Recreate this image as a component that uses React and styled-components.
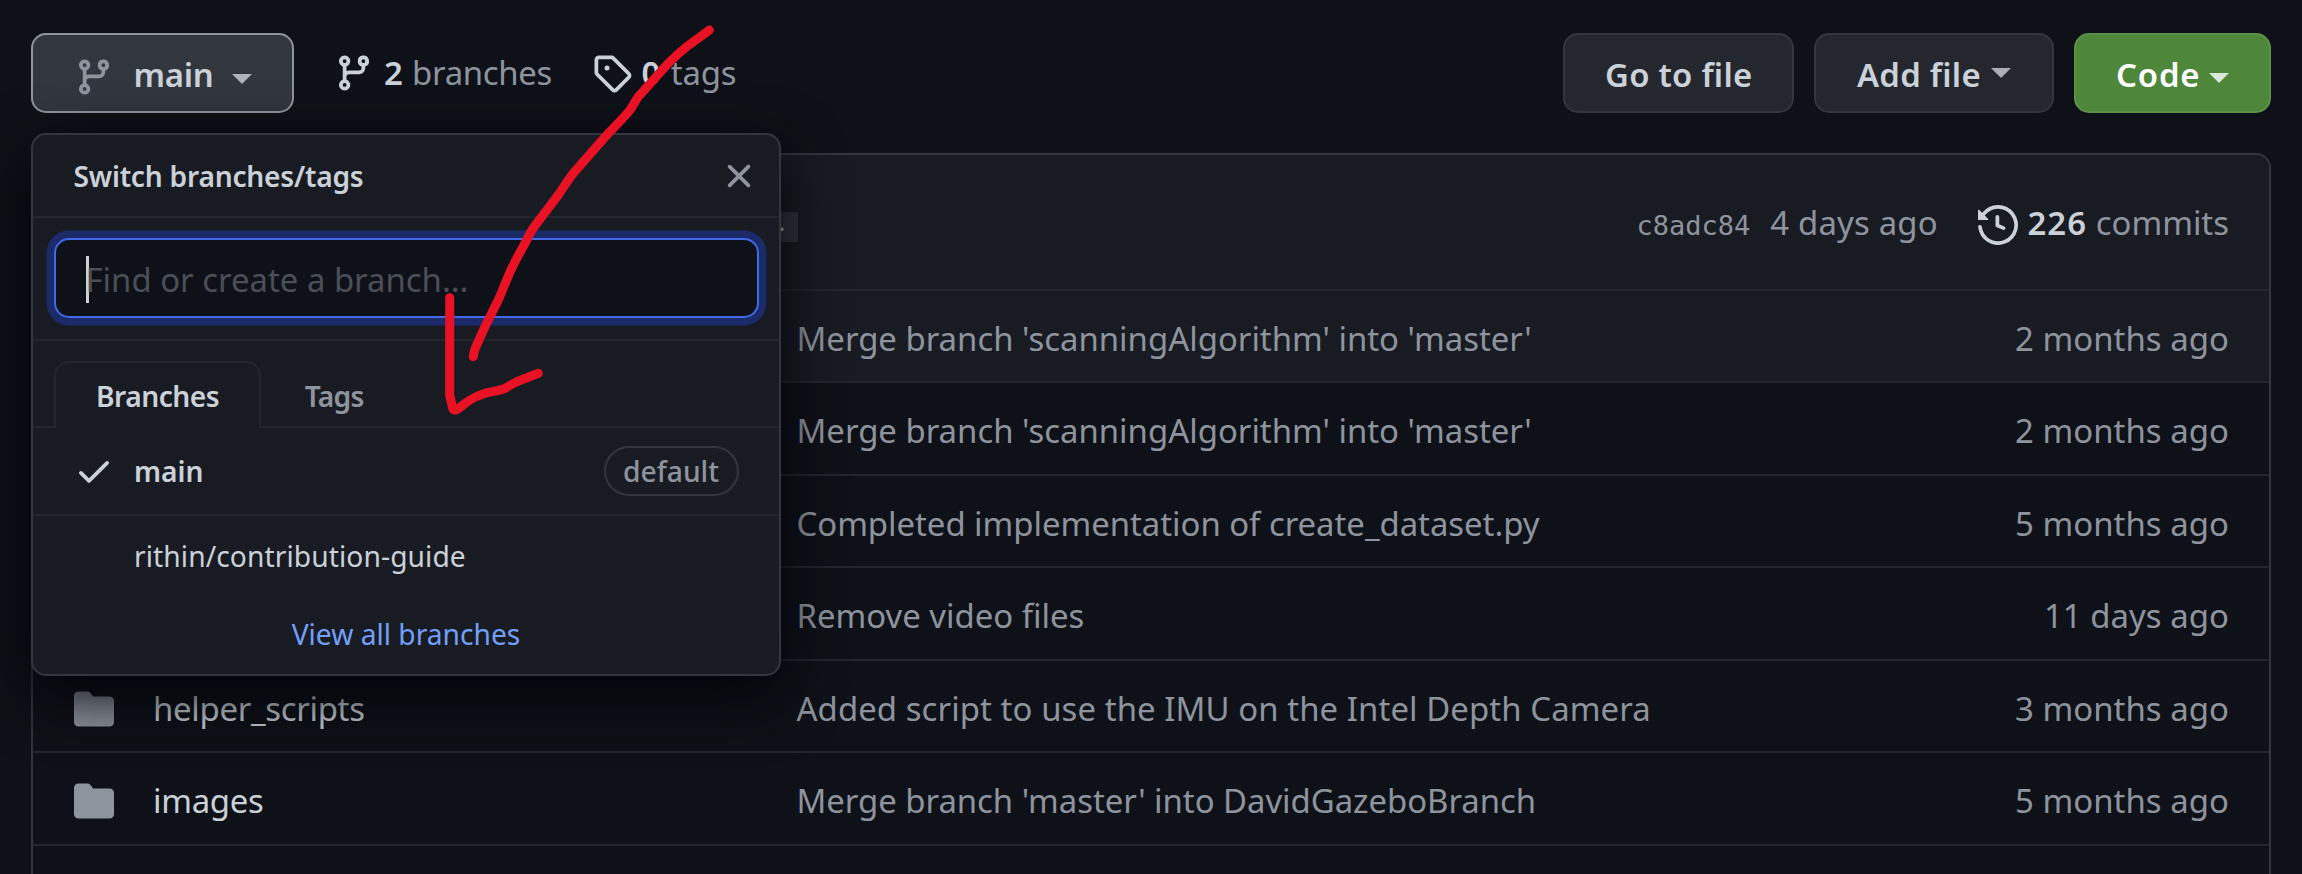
import React from "react";
import styled, { createGlobalStyle } from "styled-components";

const color = {
  canvas: "#0e1117",
  subtle: "#191b22",
  control: "#24272e",
  controlActive: "#32363d",
  border: "#32363d",
  borderMuted: "#23262d",
  text: "#cbd1d9",
  muted: "#8e949e",
  faint: "#4a4f58",
  link: "#729ff9",
  focus: "#4269e6",
  focusRing: "#1b2a68",
  green: "#4e863a",
  greenBorder: "#5d9149",
  ink: "#e81224",
};

const GlobalStyle = createGlobalStyle`
  *, *::before, *::after { box-sizing: border-box; }
  html, body { margin: 0; background: ${color.canvas}; }
  body {
    height: 874px;
    overflow: hidden;
    color: ${color.text};
    font-family: "Noto Sans", "Open Sans", sans-serif;
    font-size: 32.9px;
    line-height: 50px;
  }
`;

const Page = styled.div`
  position: relative;
  height: 874px;
  overflow: hidden;
  padding: 33px 31px 0;
`;

const Toolbar = styled.header`
  display: flex;
  align-items: center;
  height: 80px;
`;

const Text = styled.span`
  white-space: pre;
  letter-spacing: ${(p) => p.$track || 0}px;
`;

const Strong = styled(Text)`
  font-weight: 600;
  color: ${color.text};
`;

const Muted = styled(Text)`
  color: ${color.muted};
`;

const Svg = styled.svg`
  display: block;
  flex: none;
  width: 40px;
  height: 40px;
  fill: ${(p) => p.$fill || color.text};
`;

const Caret = styled.span`
  flex: none;
  border: 10px solid transparent;
  border-top-color: currentColor;
  border-bottom: 0;
  opacity: 0.8;
`;

const Button = styled.button`
  display: flex;
  align-items: center;
  height: 80px;
  padding: 3px 40px 0;
  border: 2px solid ${(p) => (p.$primary ? color.greenBorder : color.border)};
  border-radius: 15px;
  background: ${(p) => (p.$primary ? color.green : color.control)};
  color: ${(p) => (p.$primary ? "#fff" : color.text)};
  font: inherit;
  font-weight: 600;
`;

const BranchSelect = styled.div`
  position: relative;
`;

const BranchButton = styled(Button)`
  width: 262.5px;
  padding: 0 0 0 41px;
  background: ${color.controlActive};
  border-color: ${color.muted};

  ${Svg} { margin: 7px 19.5px 0 0; }
  ${Text} { padding-top: 3px; }
  ${Caret} { margin: 11px 0 0 19px; }
`;

const Stat = styled.a`
  display: flex;
  align-items: center;
  padding-bottom: 1px;
  margin-left: ${(p) => p.$gap}px;

  ${Svg} { margin-right: ${(p) => p.$iconGap}px; }
`;

const Actions = styled.div`
  display: flex;
  gap: 20px;
  margin-left: auto;
`;

const GoToFile = styled(Button)`
  width: 231px;
`;

const AddFile = styled(Button)`
  width: 240px;
  padding-left: 41px;
  ${Caret} { margin: 0 0 3px 10px; }
`;

const CodeButton = styled(Button)`
  width: 197px;
  ${Caret} { margin: 7px 0 0 9px; }
`;

/* Branch picker popover */

const Popover = styled.section`
  position: absolute;
  z-index: 2;
  top: 100px;
  left: 0;
  width: 750px;
  height: 543px;
  border: 2px solid ${color.border};
  border-radius: 15px;
  background: ${color.subtle};
  box-shadow: 0 20px 60px #010409;
  font-size: 28.2px;
`;

const PopoverHeader = styled.div`
  display: flex;
  align-items: center;
  justify-content: space-between;
  height: 83px;
  padding: 0 20px 0 40.5px;
  border-bottom: 2px solid ${color.borderMuted};
`;

const Filter = styled.div`
  height: 123px;
  padding: 20px 20px 0 21px;
  border-bottom: 2px solid ${color.borderMuted};
`;

const FilterField = styled.div`
  display: flex;
  align-items: center;
  height: 80px;
  padding: 3px 0 0 30px;
  border: 2px solid ${color.focus};
  border-radius: 15px;
  background: ${color.canvas};
  box-shadow: 0 0 0 7.5px ${color.focusRing};
  color: ${color.faint};
  font-size: 32.9px;
`;

const TextCursor = styled.i`
  width: 2.5px;
  height: 47px;
  margin-right: -3px;
  background: ${color.text};
`;

const TabList = styled.div`
  display: flex;
  align-items: flex-end;
  height: 87px;
  padding-left: 21px;
  border-bottom: 2px solid ${color.borderMuted};
`;

const Tab = styled.div`
  height: 67px;
  margin-bottom: -2px;
  padding: 8px 40px 0 40px;
  border: 2px solid ${(p) => (p.$active ? color.borderMuted : "transparent")};
  border-bottom: 0;
  border-radius: 15px 15px 0 0;
  background: ${(p) => (p.$active ? color.subtle : "transparent")};
  font-weight: 600;
  color: ${(p) => (p.$active ? color.text : color.muted)};

  & + & { padding-left: 41.5px; }
`;

const BranchItem = styled.div`
  display: flex;
  align-items: center;
  height: ${(p) => (p.$selected ? 88 : 80)}px;
  padding: 0 40.5px 0 ${(p) => (p.$selected ? 41 : 101)}px;
  border-bottom: ${(p) => (p.$selected ? 2 : 0)}px solid ${color.borderMuted};

  ${Svg} { margin-right: 20px; }
`;

const DefaultPill = styled.span`
  height: 50px;
  margin-left: auto;
  padding: 0 17.5px;
  border: 2px solid ${color.border};
  border-radius: 25px;
  color: ${color.muted};
  font-weight: 500;
  line-height: 46px;
`;

const PopoverFooter = styled.a`
  display: flex;
  align-items: center;
  justify-content: center;
  height: 76px;
  color: ${color.link};
`;

/* File table */

const FileTable = styled.main`
  height: 760px;
  margin-top: 40px;
  border: 2px solid ${color.border};
  border-radius: 15px 15px 0 0;
`;

const LatestCommit = styled.div`
  display: flex;
  align-items: center;
  justify-content: space-between;
  height: 133.9px;
  padding: 6px 40px 0 41px;
  border-radius: 13px 13px 0 0;
  background: ${color.subtle};
`;

const MessageSlot = styled.div`
  display: flex;
  justify-content: flex-end;
  width: 724px;
  padding-top: 4px;
`;

const MoreButton = styled.span`
  width: 45px;
  height: 30px;
  border-radius: 2px;
  background: ${color.controlActive};
  color: ${color.text};
  font-size: 25px;
  line-height: 19px;
  text-align: center;
`;

const CommitMeta = styled.div`
  display: flex;
  align-items: baseline;

  ${Svg} { align-self: center; margin: 1px 9.5px 0 40px; }
`;

const Sha = styled.span`
  margin-right: 20px;
  color: ${color.muted};
  font-family: "DejaVu Sans Mono", monospace;
  font-size: 27px;
`;

const Row = styled.div`
  display: grid;
  grid-template-columns: 79px 643.5px 1fr auto;
  align-items: center;
  height: 92.5px;
  padding: 5px 40px 0 41px;
  border-top: 2px solid ${color.borderMuted};
  background: ${(p) => (p.$highlight ? color.subtle : "transparent")};
`;

const Annotation = styled.svg`
  position: absolute;
  z-index: 3;
  top: 0;
  left: 0;
  width: 760px;
  height: 440px;
  pointer-events: none;
`;

const paths = {
  branch:
    "M11.75 2.5a.75.75 0 100 1.5.75.75 0 000-1.5zm-2.25.75a2.25 2.25 0 113 2.122V6A2.5 2.5 0 0110 8.5H6a1 1 0 00-1 1v1.128a2.251 2.251 0 11-1.5 0V5.372a2.25 2.25 0 111.5 0v1.836A2.492 2.492 0 016 7h4a1 1 0 001-1v-.628A2.25 2.25 0 019.5 3.25zM4.25 12a.75.75 0 100 1.5.75.75 0 000-1.5zM3.5 3.25a.75.75 0 111.5 0 .75.75 0 01-1.5 0z",
  tag: "M2.5 7.775V2.75a.25.25 0 01.25-.25h5.025a.25.25 0 01.177.073l6.25 6.25a.25.25 0 010 .354l-5.025 5.025a.25.25 0 01-.354 0l-6.25-6.25a.25.25 0 01-.073-.177zm-1.5 0V2.75C1 1.784 1.784 1 2.75 1h5.025c.464 0 .91.184 1.238.513l6.25 6.25a1.75 1.75 0 010 2.474l-5.026 5.026a1.75 1.75 0 01-2.474 0l-6.25-6.25A1.75 1.75 0 011 7.775zM6 5a1 1 0 100 2 1 1 0 000-2z",
  close:
    "M3.72 3.72a.75.75 0 011.06 0L8 6.94l3.22-3.22a.75.75 0 111.06 1.06L9.06 8l3.22 3.22a.75.75 0 11-1.06 1.06L8 9.06l-3.22 3.22a.75.75 0 01-1.06-1.06L6.94 8 3.72 4.78a.75.75 0 010-1.06z",
  check:
    "M13.78 4.22a.75.75 0 010 1.06l-7.25 7.25a.75.75 0 01-1.06 0L2.22 9.28a.75.75 0 011.06-1.06L6 10.94l6.72-6.72a.75.75 0 011.06 0z",
  folder:
    "M1.75 1A1.75 1.75 0 000 2.75v10.5C0 14.216.784 15 1.75 15h12.5A1.75 1.75 0 0016 13.25v-8.5A1.75 1.75 0 0014.25 3h-6.5a.25.25 0 01-.2-.1l-.9-1.2c-.33-.44-.85-.7-1.4-.7h-3.5z",
  history:
    "M1.643 3.143L.427 1.927A.25.25 0 000 2.104V5.75c0 .138.112.25.25.25h3.646a.25.25 0 00.177-.427L2.715 4.215a6.5 6.5 0 11-1.18 4.458.75.75 0 10-1.493.154 8.001 8.001 0 101.6-5.684zM7.75 4a.75.75 0 01.75.75v2.992l2.028.812a.75.75 0 01-.557 1.392l-2.5-1A.75.75 0 017 8.25v-3.5A.75.75 0 017.75 4z",
};

const Icon = ({ name, fill }) => (
  <Svg viewBox="0 0 16 16" $fill={fill} aria-hidden="true">
    <path fillRule="evenodd" d={paths[name]} />
  </Svg>
);

const rows = [
  { message: "Merge branch 'scanningAlgorithm' into 'master'", age: "2 months ago", highlight: true },
  { message: "Merge branch 'scanningAlgorithm' into 'master'", age: "2 months ago" },
  { message: "Completed implementation of create_dataset.py", age: "5 months ago", track: -0.03 },
  { message: "Remove video files", age: "11 days ago" },
  {
    name: "helper_scripts",
    message: "Added script to use the IMU on the Intel Depth Camera",
    age: "3 months ago",
    track: 0.08,
  },
  { name: "images", message: "Merge branch 'master' into DavidGazeboBranch", age: "5 months ago", track: -0.03 },
  {},
];

function BranchPopover() {
  return (
    <Popover>
      <PopoverHeader>
        <Strong $track={-0.24}>Switch branches/tags</Strong>
        <Icon name="close" fill={color.muted} />
      </PopoverHeader>
      <Filter>
        <FilterField>
          <TextCursor />
          <Text>Find or create a branch...</Text>
        </FilterField>
      </Filter>
      <TabList>
        <Tab $active>
          <Text $track={-0.5}>Branches</Text>
        </Tab>
        <Tab>
          <Text $track={-0.7}>Tags</Text>
        </Tab>
      </TabList>
      <BranchItem $selected>
        <Icon name="check" />
        <Strong>main</Strong>
        <DefaultPill>default</DefaultPill>
      </BranchItem>
      <BranchItem>
        <Text $track={0.08}>rithin/contribution-guide</Text>
      </BranchItem>
      <PopoverFooter>View all branches</PopoverFooter>
    </Popover>
  );
}

export default function App() {
  return (
    <Page>
      <GlobalStyle />
      <Toolbar>
        <BranchSelect>
          <BranchButton>
            <Icon name="branch" fill={color.muted} />
            <Text $track={-0.3}>main</Text>
            <Caret />
          </BranchButton>
          <BranchPopover />
        </BranchSelect>
        <Stat $gap={40.5} $iconGap={10}>
          <Icon name="branch" />
          <Strong $track={1}>2</Strong>
          <Muted $track={-0.3}> branches</Muted>
        </Stat>
        <Stat $gap={40} $iconGap={9.5}>
          <Icon name="tag" />
          <Strong $track={2}>0</Strong>
          <Muted $track={-0.2}> tags</Muted>
        </Stat>
        <Actions>
          <GoToFile>
            <Text $track={0.25}>Go to file</Text>
          </GoToFile>
          <AddFile>
            <Text $track={0.25}>Add file</Text>
            <Caret />
          </AddFile>
          <CodeButton $primary>
            <Text $track={0.8}>Code</Text>
            <Caret />
          </CodeButton>
        </Actions>
      </Toolbar>

      <FileTable>
        <LatestCommit>
          <MessageSlot>
            <MoreButton>…</MoreButton>
          </MessageSlot>
          <CommitMeta>
            <Sha>c8adc84</Sha>
            <Muted $track={0.2}>4 days ago</Muted>
            <Icon name="history" />
            <Strong $track={1.1}>226</Strong>
            <Muted> commits</Muted>
          </CommitMeta>
        </LatestCommit>
        {rows.map((row, i) => (
          <Row key={i} $highlight={row.highlight}>
            <span>{row.name && <Icon name="folder" fill={color.muted} />}</span>
            <Text $track={-0.3}>{row.name}</Text>
            <Muted $track={row.track}>{row.message}</Muted>
            <Muted $track={0.05}>{row.age}</Muted>
          </Row>
        ))}
      </FileTable>

      <Annotation viewBox="0 0 760 440" fill="none" stroke={color.ink} strokeWidth="9" strokeLinecap="round" strokeLinejoin="round">
        <path d="M709.3 30C702 36 694 41 686.7 46.7S674 57.5 668.3 63.3L638.3 96.7C635 101 633 106 630 110C622 120 612 129 603.3 139L573.3 173.3C568 180 563 188 558.3 195L537 223C534 227 532 230 530 233.3C526 242 520 252 515 261.7C509 273 504 287 498.3 300L485 326.7L475.7 347.3C474 351 473.5 353 473.3 356.7" />
        <path d="M449.7 297.7V395L452.7 408.3Q453.5 411 457 409.5C461 407 465 403 470 400C475 397 480 395 485 393.3C491 391.5 498 391 503.3 389C508 387 512 384 516.7 381.7L538.3 373.3" />
      </Annotation>
    </Page>
  );
}
